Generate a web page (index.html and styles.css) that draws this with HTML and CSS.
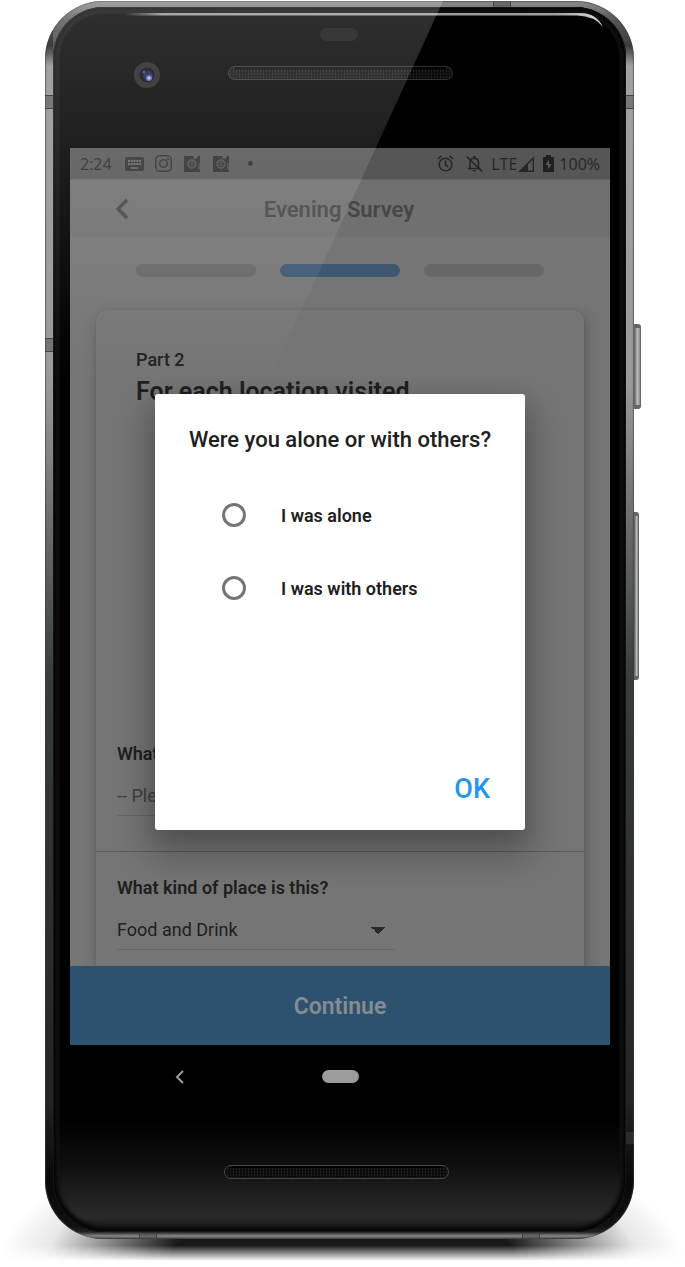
FILE: index.html
```html
<!DOCTYPE html>
<html lang="en">
<head>
<meta charset="utf-8">
<meta name="viewport" content="width=device-width, initial-scale=1">
<title>Evening Survey</title>
<link rel="stylesheet" href="styles.css">
</head>
<body>
<div class="phone">
  <div class="ground"></div>
  <div class="body">
    <div class="face">
      <svg class="hardware" viewBox="0 0 573 141" aria-hidden="true">
        <defs>
          <pattern id="mesh" width="3" height="3" patternUnits="userSpaceOnUse">
            <rect width="3" height="3" fill="#0d0c0a"/>
            <rect width="1" height="2" fill="#24221e"/>
          </pattern>
          <linearGradient id="edge" x1="0" x2="1">
            <stop offset="0" stop-color="#8f9696" stop-opacity="0"/>
            <stop offset=".08" stop-color="#8f9696"/>
            <stop offset=".9" stop-color="#9aa3a4"/>
            <stop offset="1" stop-color="#d5dcdc"/>
          </linearGradient>
        </defs>
        <path d="M71 6H528Q543 6 550 20Q542 9 524 8.500H71Z" fill="url(#edge)"/>
        <rect x="267" y="21" width="38" height="13" rx="6.500" fill="#0c0e12"/>
        <circle cx="94" cy="68" r="13" fill="#202020"/>
        <circle cx="94" cy="68" r="7.500" fill="#05060f"/>
        <circle cx="95" cy="69" r="5" fill="#151c48"/>
        <circle cx="96" cy="71" r="3" fill="#5262b8"/>
        <circle cx="96" cy="71" r="1.500" fill="#b8bff0"/>
        <circle cx="91" cy="65" r="1.500" fill="#3343a0"/>
        <rect x="175.500" y="59.500" width="224" height="13" rx="6.500" fill="url(#mesh)" stroke="#33312f"/>
        <path d="M182 61H393" stroke="#000" stroke-width="2"/>
      </svg>

      <div class="screen">
        <div class="status">
          <span>2:24</span>
          <svg class="kbd" width="19" height="14" viewBox="0 0 19 14" aria-hidden="true"><rect width="19" height="14" rx="2" fill="#303030"/><path d="M3 4H16M3 7H16" stroke="#686868" stroke-width="2" stroke-dasharray="2 .75"/><path d="M6 11H13" stroke="#686868" stroke-width="1.500"/></svg>
          <svg width="17" height="17" viewBox="0 0 17 17" fill="none" stroke="#303030" stroke-width="1.600" aria-hidden="true"><rect x=".8" y=".8" width="15.400" height="15.400" rx="4"/><circle cx="8.500" cy="8.500" r="3.800"/><circle cx="13" cy="4" r=".5"/></svg>
          <svg class="app" width="17" height="17" viewBox="0 0 17 17" aria-hidden="true"><path d="M0 1H10L9 3L12 4L15 0V1H16V17H0Z" fill="#2c2c2c"/><path d="M15 8V15M10 3L13 0" stroke="#565656"/><circle cx="8" cy="9" r="4" fill="none" stroke="#505050" stroke-width="1.500"/><path d="M5 8L8 6L11 8M8 6V12M5 11L8 9L11 11" stroke="#484848" fill="none"/></svg>
          <svg class="app" width="17" height="17" viewBox="0 0 17 17" aria-hidden="true"><path d="M0 1H10L9 3L12 4L15 0V1H16V17H0Z" fill="#2c2c2c"/><path d="M15 8V15M10 3L13 0" stroke="#565656"/><circle cx="8" cy="9" r="4" fill="none" stroke="#505050" stroke-width="1.500"/><path d="M5 8L8 6L11 8M8 6V12M5 11L8 9L11 11" stroke="#484848" fill="none"/></svg>
          <i class="more"></i>
          <span class="grow"></span>
          <svg class="alarm" width="17" height="17" viewBox="0 0 17 17" fill="none" stroke="#272727" stroke-width="1.600" aria-hidden="true"><circle cx="8.500" cy="9.500" r="6.300"/><path d="M8.500 5.500V10L11.300 11.800M.8 4L4.600 .9M16.200 4L12.400 .9"/></svg>
          <svg class="bell" width="17" height="17" viewBox="0 0 17 17" aria-hidden="true"><path d="M4 13V7.500C4 5 5.500 3.300 8 3.200C10.800 3.200 12.500 5 12.500 7.500V13M2 13.500H14.500" fill="none" stroke="#272727" stroke-width="1.600"/><path d="M7 1H9.500V3H7ZM6.500 15H10A1.700 1.700 0 0 1 6.500 15Z" fill="#272727"/><path d="M.8 1.500L16 16.500" stroke="#272727" stroke-width="1.600"/></svg>
          <span class="lte">LTE</span>
          <svg width="17" height="16" viewBox="0 0 17 16" aria-hidden="true"><path d="M15.300 2V15.200H2Z" fill="none" stroke="#272727" stroke-width="1.400"/><path d="M10 7V16H0Z" fill="#272727"/></svg>
          <svg class="battery" width="11" height="17" viewBox="0 0 11 17" aria-hidden="true"><path d="M3 0H8V2H10Q11 2 11 3V16Q11 17 10 17H1Q0 17 0 16V3Q0 2 1 2H3Z" fill="#1f1f1f"/><path d="M6 4.500L2.500 10H5V14.500L8.500 9H6Z" fill="#595959"/></svg>
          <span>100%</span>
        </div>

        <header class="bar">
          <button class="back" type="button" aria-label="Back"><svg width="14" height="22" viewBox="0 0 14 22"><path d="M12 2L3 11L12 20" fill="none" stroke="#464646" stroke-width="3.400"/></svg></button>
          <h1>Evening Survey</h1>
        </header>

        <main class="content">
          <div class="steps"><i></i><i class="on"></i><i></i></div>
          <section class="card">
            <div class="intro">
              <p>Part 2</p>
              <h2>For each location visited</h2>
            </div>
            <div class="field">
              <label for="what">What</label>
              <select id="what" class="empty"><option>-- Please select --</option></select>
            </div>
            <div class="field second">
              <label for="kind">What kind of place is this?</label>
              <select id="kind"><option>Food and Drink</option></select>
            </div>
          </section>
        </main>
        <button class="continue" type="button">Continue</button>

        <div class="overlay">
          <form class="dialog" role="dialog" aria-labelledby="ask">
            <h3 id="ask">Were you alone or with others?</h3>
            <label class="choice"><input type="radio" name="company">I was alone</label>
            <label class="choice"><input type="radio" name="company">I was with others</label>
            <button class="ok" type="button">OK</button>
          </form>
        </div>
      </div>

      <nav class="keys">
        <button type="button" aria-label="System back"><svg width="10" height="14" viewBox="0 0 10 14"><path d="M8 1L2 7L8 13" fill="none" stroke="#9b9b9b" stroke-width="2"/></svg></button>
        <button class="home" type="button" aria-label="Home"></button>
        <span></span>
      </nav>
      <svg class="hardware chin" viewBox="0 0 573 124" aria-hidden="true">
        <rect x="171.500" y="57.500" width="224" height="13" rx="6.500" fill="url(#mesh)" stroke="#4a4845"/>
        <path d="M178 59H389" stroke="#000" stroke-width="2"/>
      </svg>
    </div>
    <i class="seam left a"></i><i class="seam left b"></i>
    <i class="seam right a"></i><i class="seam right c"></i>
    <i class="seam top"></i><i class="seam bottom d"></i><i class="seam bottom e"></i>
    <i class="key power"></i><i class="key volume"></i>
    <div class="glare"></div>
  </div>
</div>
</body>
</html>
```

FILE: styles.css
```css
* { box-sizing: border-box; }
body { margin: 0; background: #fff; font-family: Roboto, "Liberation Sans", sans-serif; color: #202020; overflow-x: hidden; }
h1, h2, h3, p { margin: 0; font-weight: 500; }
button { border: 0; padding: 0; background: none; font-family: inherit; }
svg { display: block; flex: none; }

/* Device shell */
.phone { position: relative; padding: 1px 51px 28px 45px; }
.ground { position: absolute; left: 0; right: 0; bottom: 6px; height: 130px;
  background: radial-gradient(ellipse 50% 100% at 50% 100%, #181818 50%, rgba(24,24,24,.5) 70%, rgba(24,24,24,.1) 86%, transparent);
  mask-image: linear-gradient(#000 88%, transparent); }
.body { position: relative; padding: 6px 8px 7px; border-radius: 58px;
  background: linear-gradient(#8d8d8d, #555 20px, #3c3c3c 45px, #a2a2a2 65px, #9a9a9a 380px, #383c3c 680px, #242424 1100px, #080808 1180px, #111 1225px, #222 1231px, #888 1235px, #444);
  box-shadow: inset 0 0 1px 1px rgba(60,60,60,.6); }
.face { padding: 0 16px 0 17px; border-radius: 51px; background: linear-gradient(#000 1110px, #101010 1160px, #2b2b2b 1210px, #111);
  box-shadow: inset 0 0 0 1px #141414, inset 0 0 4px 3px #000, inset 0 0 3px 6px #161616; }
.hardware { height: 141px; width: calc(100% + 33px); margin: 0 -16px 0 -17px; }
.chin { height: 124px; }
.seam { position: absolute; width: 8px; height: 14px; border: solid #444; border-width: 1px 0; background: rgba(70,70,70,.45); }
.seam.left { left: 0; }
.seam.right { right: 0; }
.a { top: 94px; }
.b { top: 337px; }
.c { top: 1130px; border-color: #1a1a1a; }
.seam.top, .seam.bottom { width: 18px; height: 6px; border-width: 0 1px; }
.seam.top { top: 0; left: 76%; }
.seam.bottom { bottom: 0; }
.d { left: 16%; }
.e { right: 16%; }
.key { position: absolute; left: 100%; border: 1px solid #666; border-width: 4px 1px; border-radius: 0 3px 3px 0; background: linear-gradient(90deg, #777, #bbb, #888); }
.power { top: 323px; width: 7px; height: 85px; }
.volume { top: 511px; width: 5px; height: 168px; }
.glare { position: absolute; inset: 0; height: 400px; border-radius: 58px 0 0; pointer-events: none;
  background: linear-gradient(rgba(255,255,255,.19), rgba(255,255,255,.12) 145px, rgba(255,255,255,.04) 300px, transparent 390px);
  clip-path: polygon(8px 0, 398px 0, 215px 400px, 8px 400px); }

/* App screen */
.screen { position: relative; background: #757575; overflow: hidden; }
.status { display: flex; align-items: center; height: 32px; padding: 0 10px; background: #565656; border-bottom: 1px solid #646464; color: #272727; font-size: 16px; font-weight: 400; font-family: "Open Sans", Roboto, sans-serif; }
.kbd { margin: 0 11px 0 13px; }
.app { margin-left: 12px; }
.more { width: 5px; height: 5px; margin-left: 18px; border-radius: 50%; background: #2b2b2b; }
.grow { flex: 1; }
.bell { margin-left: 12px; }
.lte { margin: 0 1px 0 8px; }
.battery { margin: 0 5px 0 8px; }
.bar { display: grid; grid-template-columns: 104px 1fr 106px; align-items: center; height: 57px; background: #707070; color: #464646; }
.bar h1 { padding-top: 2px; font-size: 22px; line-height: 32px; font-weight: 600; text-align: center; }
.back { justify-self: center; }
.content { padding: 27px 26px 0; }
.steps { display: flex; gap: 24px; padding: 0 40px; margin-bottom: 33px; }
.steps i { flex: 1; height: 13px; border-radius: 7px; background: #676767; }
.steps .on { background: #3e5872; }
.card { border-radius: 10px 10px 0 0; background: #757575; box-shadow: 2px 5px 14px rgba(0,0,0,.25), 0 0 1px rgba(0,0,0,.2); }
.intro { min-height: 420px; padding: 38px 40px 0; }
.intro p { font-size: 18px; line-height: 24px; }
.intro h2 { margin-top: 4px; font-size: 25px; line-height: 32px; font-weight: 600; white-space: nowrap; }
.field { padding: 12px 21px 35px; }
.field label { display: block; font-size: 18px; line-height: 24px; font-weight: 600; }
.field select { display: block; width: 278px; height: 39px; margin-top: 11px; padding: 0; border: 0; border-bottom: 1px solid #666; border-radius: 0; appearance: none; color: #202020; font: 400 18px/24px Roboto, sans-serif;
  background-color: transparent;
  background-image: linear-gradient(to bottom right, #2a2a2a 50%, transparent 50%), linear-gradient(to bottom left, #2a2a2a 50%, transparent 50%);
  background-size: 7px 7px; background-position: right 10px center, right 17px center; background-repeat: no-repeat; }
.field .empty { color: #3f3f3f; }
.second { padding: 24px 21px 16px; border-top: 1px solid #5a5a5a; }
.continue { position: relative; display: block; width: 100%; height: 79px; padding-top: 2px; background: #2d526f; color: #858b90; font-size: 23px; font-weight: 600; }

/* Question dialog */
.overlay { position: absolute; inset: 31px 0 0; display: flex; align-items: center; justify-content: center; padding: 0 85px; }
.dialog { display: flex; flex-direction: column; width: 100%; min-height: 436px; padding: 30px 32px 21px; border-radius: 3px; background: #fff; box-shadow: 0 20px 36px 6px rgba(0,0,0,.26), 0 6px 20px rgba(0,0,0,.1); }
.dialog h3 { margin-bottom: 42px; font-size: 22px; line-height: 32px; text-align: center; white-space: nowrap; }
.choice { display: flex; align-items: center; gap: 35px; height: 34px; margin: 0 0 39px 35px; font-size: 18px; font-weight: 600; }
.choice input { appearance: none; width: 24px; height: 24px; margin: 0; border: 3px solid #757575; border-radius: 50%; }
.choice input:checked { background: radial-gradient(#2196f3 5px, transparent 6px); }
.ok { align-self: flex-end; margin-top: auto; padding: 0 3px; color: #2196f3; font-size: 27px; line-height: 40px; font-weight: 500; }

/* System navigation */
.keys { display: grid; grid-template-columns: 180px 1fr 180px; align-items: center; justify-items: center; height: 63px; padding: 0 20px; }
.home { width: 37px; height: 13px; border-radius: 7px; background: #9b9b9b; }
```
